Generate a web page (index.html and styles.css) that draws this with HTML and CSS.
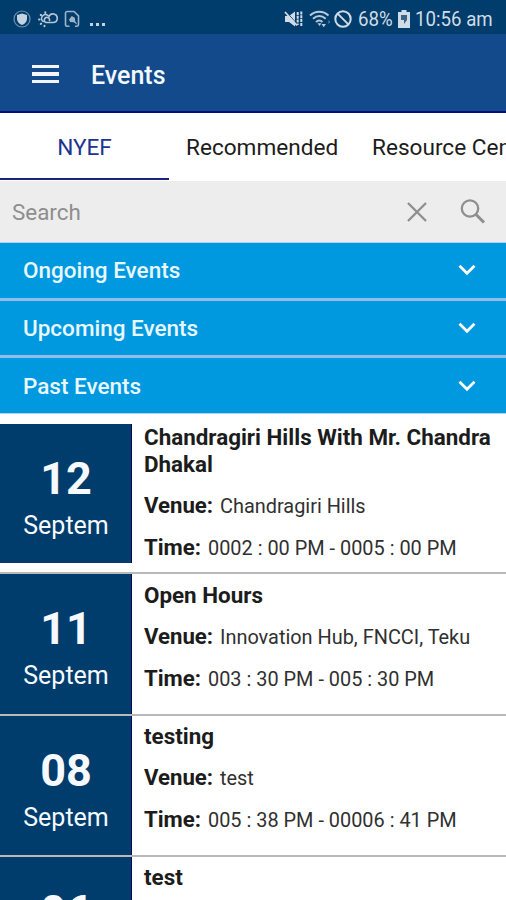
FILE: index.html
```html
<!DOCTYPE html>
<html lang="en">
<head>
  <meta charset="UTF-8" />
  <meta name="viewport" content="width=device-width, initial-scale=1.0"/>
  <title>Events</title>
  <link rel="stylesheet" href="styles.css">
</head>
<body>
  <!-- Status bar -->
  <div class="status-bar">
    <div class="status-left">
      <svg width="18" height="18" viewBox="0 0 18 18">
        <circle cx="9" cy="9" r="8" fill="none" stroke="#6f92ae" stroke-width="1.2"/>
        <path d="M9 3.6 14 5v4c0 2.6-2 4.7-5 6-3-1.300-5-3.400-5-6V5z" fill="#c3d3df"/>
      </svg>
      <svg width="20" height="18" viewBox="0 0 20 18">
        <g fill="none" stroke="#b4c7d6" stroke-width="1.6" stroke-linecap="round">
          <path d="M8 12.500h7a4.300 4.300 0 1 0-4-6M11.500 10.500A2.600 2.600 0 1 0 8 12.500M5 11.500A3.600 3.600 0 0 1 10 5.500"/>
          <path d="M1 9.500h.6M2.700 4.900l.5.400M7.300 2.300v.6M2.700 14l.5-.4M6.500 16.200v-.5" stroke-width="2"/>
        </g>
      </svg>
      <svg width="16" height="18" viewBox="0 0 16 18">
        <path d="M5.500 16.300H3.200a1.700 1.700 0 0 1-1.700-1.700V3.200A1.700 1.700 0 0 1 3.200 1.500H10l4.500 4.300v8.800a1.700 1.700 0 0 1-1.700 1.700H11" fill="none" stroke="#9db5c8" stroke-width="1.6"/>
        <path d="M5 9.500 7.800 6l3 1.800.4 3.200 2.300 3.800-3.800-2.600-3.500-.2z" fill="#9db5c8"/>
      </svg>
      <span class="dots"><i></i><i></i><i></i></span>
    </div>
    <div class="status-right">
      <svg class="mute" width="19" height="18" viewBox="0 0 19 18">
        <path d="M1 6h4l6-4.500v15L5 12H1z" fill="#d0dce5"/>
        <path d="M2.500 2 14 15" stroke="#003c6c" stroke-width="1"/>
        <path d="M1 2 13 15.500" stroke="#d0dce5" stroke-width="1.8"/>
        <path d="M13.700 2v13M17.300 1.500v15" stroke="#d0dce5" stroke-width="2" stroke-dasharray="3 .8"/>
      </svg>
      <svg class="wifi" width="22" height="18" viewBox="0 0 22 18">
        <g fill="none" stroke="#b9cad8" stroke-width="2">
          <path d="M1 5.500c5.500-5 13-5 18.500 0M4 8.700c4-3.500 8.700-3.500 12.700 0M7 12c2-1.800 4.500-1.800 6.500 0"/>
        </g>
        <path d="M8.500 13.200h4L10.500 16zM12.500 14h4.500L14.700 17.300z" fill="#b9cad8"/>
        <path d="M19.500 10l1.500 2-1.500 2z" fill="#6f92ae"/>
      </svg>
      <svg class="block" width="18" height="18" viewBox="0 0 18 18">
        <circle cx="9" cy="9" r="7.7" fill="none" stroke="#d0dce5" stroke-width="2"/>
        <path d="M3.600 3.600 14.400 14.400" stroke="#d0dce5" stroke-width="2"/>
      </svg>
      <span class="percent">68%</span>
      <svg class="battery" width="12" height="18" viewBox="0 0 12 18">
        <path d="M3.500 0h5v2H12v16H0V2h3.500z" fill="#d0dce5"/>
        <path d="M3 5h6v5L6 14V10H3z" fill="#3c6288"/>
      </svg>
      <span class="clock">10:56 am</span>
    </div>
  </div>

  <!-- Header -->
  <div class="header">
    <div class="menu"><span></span><span></span><span></span></div>
    <h1>Events</h1>
  </div>

  <!-- Tabs -->
  <div class="tabs">
    <div class="tab active">NYEF</div>
    <div class="tab recommended">Recommended</div>
    <div class="tab resource">Resource Center</div>
  </div>

  <!-- Search -->
  <div class="search">
    <span class="placeholder">Search</span>
    <svg class="clear" width="20" height="20" viewBox="0 0 20 20">
      <path d="M1 1 19 19M19 1 1 19" stroke="#8e8e8e" stroke-width="2.3"/>
    </svg>
    <svg class="find" width="26" height="26" viewBox="0 0 26 26">
      <circle cx="10" cy="9.5" r="8.2" fill="none" stroke="#8e8e8e" stroke-width="2.3"/>
      <path d="M16 15.500 24 23.500" stroke="#8e8e8e" stroke-width="3"/>
    </svg>
  </div>

  <!-- Event groups -->
  <div class="groups">
    <div class="group">
      <span>Ongoing Events</span>
      <svg width="18" height="12" viewBox="0 0 18 12"><path d="M1.500 1.800 9 9.300 16.500 1.800" fill="none" stroke="#fff" stroke-width="2.7"/></svg>
    </div>
    <div class="group">
      <span>Upcoming Events</span>
      <svg width="18" height="12" viewBox="0 0 18 12"><path d="M1.500 1.800 9 9.300 16.500 1.800" fill="none" stroke="#fff" stroke-width="2.7"/></svg>
    </div>
    <div class="group">
      <span>Past Events</span>
      <svg width="18" height="12" viewBox="0 0 18 12"><path d="M1.500 1.800 9 9.300 16.500 1.800" fill="none" stroke="#fff" stroke-width="2.7"/></svg>
    </div>
  </div>

  <!-- Event list -->
  <div class="events">
    <div class="event first">
      <div class="date"><b>12</b><span>Septem</span></div>
      <div class="info">
        <h2>Chandragiri Hills With Mr. Chandra Dhakal</h2>
        <p><b>Venue:</b> <span>Chandragiri Hills</span></p>
        <p><b>Time:</b> <span>0002 : 00 PM - 0005 : 00 PM</span></p>
      </div>
    </div>
    <div class="event">
      <div class="date"><b>11</b><span>Septem</span></div>
      <div class="info">
        <h2>Open Hours</h2>
        <p><b>Venue:</b> <span>Innovation Hub, FNCCI, Teku</span></p>
        <p><b>Time:</b> <span>003 : 30 PM - 005 : 30 PM</span></p>
      </div>
    </div>
    <div class="event">
      <div class="date"><b>08</b><span>Septem</span></div>
      <div class="info">
        <h2>testing</h2>
        <p><b>Venue:</b> <span>test</span></p>
        <p><b>Time:</b> <span>005 : 38 PM - 00006 : 41 PM</span></p>
      </div>
    </div>
    <div class="event last">
      <div class="date"><b>06</b></div>
      <div class="info">
        <h2>test</h2>
      </div>
    </div>
  </div>
</body>
</html>
```
FILE: styles.css
```css
* {
  margin: 0;
  padding: 0;
  box-sizing: border-box;
}
body {
  width: 506px;
  height: 900px;
  overflow: hidden;
  background: #fff;
  font-family: Roboto, sans-serif;
  color: #1c1c1c;
}
svg {
  display: block;
  flex: none;
}

/* Status bar */
.status-bar {
  display: flex;
  justify-content: space-between;
  height: 34px;
  padding: 3px 14px 0 13px;
  background: #003c6c;
  color: #d0dce5;
}
.status-left,
.status-right {
  display: flex;
  align-items: center;
}
.status-left {
  gap: 6.5px;
}
.dots {
  display: flex;
  gap: 3px;
  margin: 12px 0 0 3px;
}
.dots i {
  width: 3px;
  height: 3px;
  background: #c3d3df;
}
.wifi {
  margin-left: 6px;
}
.block {
  margin-left: 3px;
}
.percent,
.clock {
  font-size: 21px;
  line-height: 30px;
  white-space: nowrap;
  transform: scaleX(0.89);
  transform-origin: left;
}
.percent {
  width: 35px;
  margin-left: 6px;
}
.clock {
  width: 77px;
}
.battery {
  margin: 0 5px;
}

/* Header */
.header {
  display: flex;
  align-items: center;
  height: 79px;
  padding: 3px 0 0 32px;
  background: #134a8c;
  border-bottom: 2px solid #04107a;
}
.menu {
  display: flex;
  flex-direction: column;
  gap: 4px;
  width: 27px;
  margin-right: 32px;
}
.menu span {
  height: 3.5px;
  background: #f4f4fc;
}
.header h1 {
  padding-top: 3px;
  font-size: 25px;
  font-weight: 500;
  line-height: 30px;
  color: #f4f8ff;
}

/* Tabs */
.tabs {
  display: flex;
  height: 68px;
  overflow: hidden;
}
.tab {
  flex: none;
  height: 67px;
  font-size: 22.6px;
  line-height: 70px;
  white-space: nowrap;
}
.tab.active {
  width: 169px;
  text-align: center;
  color: #1c3590;
  border-bottom: 2.5px solid #1a237e;
}
.recommended {
  width: 185px;
  padding-left: 17px;
}
.resource {
  width: 152px;
  padding-left: 18px;
  overflow: hidden;
}

/* Search */
.search {
  display: flex;
  align-items: center;
  height: 62px;
  padding: 0 20px 0 12px;
  background: #ededed;
  border-bottom: 1px solid #b4d3e6;
}
.placeholder {
  flex: 1;
  font-size: 22.4px;
  color: #8e8e8e;
}
.find {
  margin-left: 33px;
}

/* Event groups */
.group {
  display: flex;
  align-items: center;
  justify-content: space-between;
  height: 57.7px;
  padding: 0 30px 0 23px;
  background: #0099e0;
  border-bottom: 3px solid #92bde6;
  font-size: 22.5px;
  font-weight: 500;
  color: #e9f7ff;
}
.group:last-child {
  height: 56px;
  border-bottom: 1px solid #b4d3e6;
}

/* Event list */
.events {
  padding-top: 1px;
}
.event {
  display: flex;
  height: 141.3px;
  border-bottom: 2px solid #b9b9b9;
}
.date {
  flex: none;
  display: flex;
  flex-direction: column;
  align-items: center;
  width: 132px;
  padding: 28px 0 0 1px;
  background: #003c6c;
  border-right: 1.5px solid #03085e;
  color: #f6faff;
}
.date b {
  font-size: 45px;
  line-height: 54px;
}
.date span {
  font-size: 25px;
  line-height: 40px;
}
.info {
  flex: 1;
  padding: 7.5px 0 0 12px;
}
.info h2 {
  font-size: 22.4px;
  font-weight: 700;
  line-height: 27px;
}
.info p {
  margin-top: 14px;
  font-size: 19.9px;
  line-height: 27px;
  white-space: nowrap;
}
.info p span {
  color: #303030;
}
.info p b {
  margin-right: 2px;
  font-size: 22.2px;
  font-weight: 700;
}
.event.first {
  height: 159px;
  padding: 9px 0;
}
.event.first .info {
  padding-top: 0;
}
.event.last {
  height: 44px;
  border-bottom: 0;
}
```
